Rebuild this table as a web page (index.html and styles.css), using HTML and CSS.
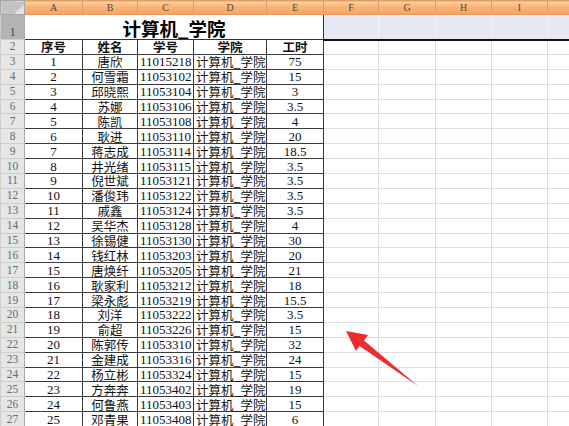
FILE: index.html
```html
<!DOCTYPE html>
<html lang="zh-CN">
<head>
<meta charset="utf-8">
<title>计算机_学院</title>
<link rel="stylesheet" href="styles.css">
</head>
<body>
<div class="wrap">
<table class="sheet">
<colgroup>
<col class="w-rh"><col class="w-a"><col class="w-b"><col class="w-c"><col class="w-d"><col class="w-e"><col class="w-f"><col class="w-g"><col class="w-h"><col class="w-i"><col class="w-j">
</colgroup>
<tr class="hdr"><th class="corner"></th><th class="ch">A</th><th class="ch">B</th><th class="ch">C</th><th class="ch">D</th><th class="ch">E</th><th class="ch">F</th><th class="ch">G</th><th class="ch">H</th><th class="ch">I</th><th class="ch">J</th></tr>
<tr class="r1"><th class="rh rh1">1</th><td class="title" colspan="5">计算机_学院</td><td class="sel"></td><td class="sel"></td><td class="sel"></td><td class="sel"></td><td class="sel"></td></tr>
<tr><th class="rh">2</th><td class="t c b">序号</td><td class="t c b">姓名</td><td class="t c b">学号</td><td class="t c b">学院</td><td class="t c b">工时</td><td></td><td></td><td></td><td></td><td></td></tr>
<tr><th class="rh">3</th><td class="t c n">1</td><td class="t c">唐欣</td><td class="t l n">11015218</td><td class="t l">计算机_学院</td><td class="t c n">75</td><td></td><td></td><td></td><td></td><td></td></tr>
<tr><th class="rh">4</th><td class="t c n">2</td><td class="t c">何雪霜</td><td class="t l n">11053102</td><td class="t l">计算机_学院</td><td class="t c n">15</td><td></td><td></td><td></td><td></td><td></td></tr>
<tr><th class="rh">5</th><td class="t c n">3</td><td class="t c">邱晓熙</td><td class="t l n">11053104</td><td class="t l">计算机_学院</td><td class="t c n">3</td><td></td><td></td><td></td><td></td><td></td></tr>
<tr><th class="rh">6</th><td class="t c n">4</td><td class="t c">苏娜</td><td class="t l n">11053106</td><td class="t l">计算机_学院</td><td class="t c n">3.5</td><td></td><td></td><td></td><td></td><td></td></tr>
<tr><th class="rh">7</th><td class="t c n">5</td><td class="t c">陈凯</td><td class="t l n">11053108</td><td class="t l">计算机_学院</td><td class="t c n">4</td><td></td><td></td><td></td><td></td><td></td></tr>
<tr><th class="rh">8</th><td class="t c n">6</td><td class="t c">耿进</td><td class="t l n">11053110</td><td class="t l">计算机_学院</td><td class="t c n">20</td><td></td><td></td><td></td><td></td><td></td></tr>
<tr><th class="rh">9</th><td class="t c n">7</td><td class="t c">蒋志成</td><td class="t l n">11053114</td><td class="t l">计算机_学院</td><td class="t c n">18.5</td><td></td><td></td><td></td><td></td><td></td></tr>
<tr><th class="rh">10</th><td class="t c n">8</td><td class="t c">井光绪</td><td class="t l n">11053115</td><td class="t l">计算机_学院</td><td class="t c n">3.5</td><td></td><td></td><td></td><td></td><td></td></tr>
<tr><th class="rh">11</th><td class="t c n">9</td><td class="t c">倪世斌</td><td class="t l n">11053121</td><td class="t l">计算机_学院</td><td class="t c n">3.5</td><td></td><td></td><td></td><td></td><td></td></tr>
<tr><th class="rh">12</th><td class="t c n">10</td><td class="t c">潘俊玮</td><td class="t l n">11053122</td><td class="t l">计算机_学院</td><td class="t c n">3.5</td><td></td><td></td><td></td><td></td><td></td></tr>
<tr><th class="rh">13</th><td class="t c n">11</td><td class="t c">戚鑫</td><td class="t l n">11053124</td><td class="t l">计算机_学院</td><td class="t c n">3.5</td><td></td><td></td><td></td><td></td><td></td></tr>
<tr><th class="rh">14</th><td class="t c n">12</td><td class="t c">吴华杰</td><td class="t l n">11053128</td><td class="t l">计算机_学院</td><td class="t c n">4</td><td></td><td></td><td></td><td></td><td></td></tr>
<tr><th class="rh">15</th><td class="t c n">13</td><td class="t c">徐锡健</td><td class="t l n">11053130</td><td class="t l">计算机_学院</td><td class="t c n">30</td><td></td><td></td><td></td><td></td><td></td></tr>
<tr><th class="rh">16</th><td class="t c n">14</td><td class="t c">钱红林</td><td class="t l n">11053203</td><td class="t l">计算机_学院</td><td class="t c n">20</td><td></td><td></td><td></td><td></td><td></td></tr>
<tr><th class="rh">17</th><td class="t c n">15</td><td class="t c">唐焕纤</td><td class="t l n">11053205</td><td class="t l">计算机_学院</td><td class="t c n">21</td><td></td><td></td><td></td><td></td><td></td></tr>
<tr><th class="rh">18</th><td class="t c n">16</td><td class="t c">耿家利</td><td class="t l n">11053212</td><td class="t l">计算机_学院</td><td class="t c n">18</td><td></td><td></td><td></td><td></td><td></td></tr>
<tr><th class="rh">19</th><td class="t c n">17</td><td class="t c">梁永彪</td><td class="t l n">11053219</td><td class="t l">计算机_学院</td><td class="t c n">15.5</td><td></td><td></td><td></td><td></td><td></td></tr>
<tr><th class="rh">20</th><td class="t c n">18</td><td class="t c">刘洋</td><td class="t l n">11053222</td><td class="t l">计算机_学院</td><td class="t c n">3.5</td><td></td><td></td><td></td><td></td><td></td></tr>
<tr><th class="rh">21</th><td class="t c n">19</td><td class="t c">俞超</td><td class="t l n">11053226</td><td class="t l">计算机_学院</td><td class="t c n">15</td><td></td><td></td><td></td><td></td><td></td></tr>
<tr><th class="rh">22</th><td class="t c n">20</td><td class="t c">陈郭传</td><td class="t l n">11053310</td><td class="t l">计算机_学院</td><td class="t c n">32</td><td></td><td></td><td></td><td></td><td></td></tr>
<tr><th class="rh">23</th><td class="t c n">21</td><td class="t c">金建成</td><td class="t l n">11053316</td><td class="t l">计算机_学院</td><td class="t c n">24</td><td></td><td></td><td></td><td></td><td></td></tr>
<tr><th class="rh">24</th><td class="t c n">22</td><td class="t c">杨立彬</td><td class="t l n">11053324</td><td class="t l">计算机_学院</td><td class="t c n">15</td><td></td><td></td><td></td><td></td><td></td></tr>
<tr><th class="rh">25</th><td class="t c n">23</td><td class="t c">方奔奔</td><td class="t l n">11053402</td><td class="t l">计算机_学院</td><td class="t c n">19</td><td></td><td></td><td></td><td></td><td></td></tr>
<tr><th class="rh">26</th><td class="t c n">24</td><td class="t c">何鲁燕</td><td class="t l n">11053403</td><td class="t l">计算机_学院</td><td class="t c n">15</td><td></td><td></td><td></td><td></td><td></td></tr>
<tr><th class="rh">27</th><td class="t c n">25</td><td class="t c">邓青果</td><td class="t l n">11053408</td><td class="t l">计算机_学院</td><td class="t c n">6</td><td></td><td></td><td></td><td></td><td></td></tr>
</table>
<svg class="arrow" width="569" height="426" viewBox="0 0 569 426" aria-hidden="true">
<polygon points="346,331 368,335 364,340.5 418,386 359.5,346 356,351" fill="#ee2b2d"/>
</svg>
</div>
</body>
</html>
```
FILE: styles.css
```css
html, body {
  margin: 0;
  padding: 0;
  background: #fff;
  overflow: hidden;
}
.wrap {
  position: relative;
  width: 569px;
  height: 426px;
  overflow: hidden;
}
.sheet {
  border-collapse: collapse;
  table-layout: fixed;
  width: 603px;
  font-family: "Noto Sans CJK SC", sans-serif;
  font-size: 12.5px;
  color: #111;
}
.w-rh { width: 24px; }
.w-a { width: 58px; }
.w-b { width: 55px; }
.w-c { width: 56px; }
.w-d { width: 73px; }
.w-e { width: 57px; }
.w-f { width: 55px; }
.w-g { width: 57px; }
.w-h { width: 56px; }
.w-i { width: 56px; }
.w-j { width: 56px; }
.sheet td, .sheet th {
  padding: 0;
  border: 1px solid #dadde3;
  white-space: nowrap;
  line-height: 13px;
  vertical-align: middle;
}
.sheet tr { height: 14.9px; }
.sheet tr.hdr { height: 14px; }
.sheet tr.r1 { height: 25px; }
.corner {
  background: linear-gradient(135deg, #c3c3c3 0 72%, #e4e4e4 72%);
  border: 1px solid #a8a8a8 !important;
}
.ch {
  background: linear-gradient(#fbd2a6, #f8b276 45%, #f6a35f);
  border: 1px solid #e39b5e !important;
  font-family: "Liberation Serif", serif;
  font-weight: normal;
  font-size: 10px;
  color: #5b4636;
  line-height: 12px;
}
.rh {
  background: #e6e6e6;
  border: 1px solid #cdcdcd !important;
  border-right-color: #a8a8a8 !important;
  font-family: "Liberation Serif", serif;
  font-weight: normal;
  font-size: 11.5px;
  color: #6a6a6a;
  text-align: center;
}
.rh1 {
  background: #b3b3b3;
  color: #444;
  vertical-align: bottom !important;
}
.title {
  text-align: center;
  vertical-align: bottom !important;
  font-weight: bold;
  font-size: 18.5px;
  line-height: 22px !important;
  color: #000;
  border: 1px solid #dadde3;
  border-bottom: 1px solid #333 !important;
  border-right: 1px solid #333 !important;
}
.sel {
  background: #e6e9f2;
  border-left-color: #f2f4f9 !important;
  border-right-color: #f2f4f9 !important;
  border-top-color: #e6e9f2 !important;
  border-bottom: 2px solid #111 !important;
}
.sheet td.t {
  border: 1px solid #3a3a3a;
}
.c { text-align: center; }
.l { text-align: left; padding-left: 2px !important; }
.b { font-weight: bold; }
.n {
  font-family: "Liberation Serif", serif;
  font-size: 13px;
}
.arrow {
  position: absolute;
  left: 0;
  top: 0;
  pointer-events: none;
}
```
